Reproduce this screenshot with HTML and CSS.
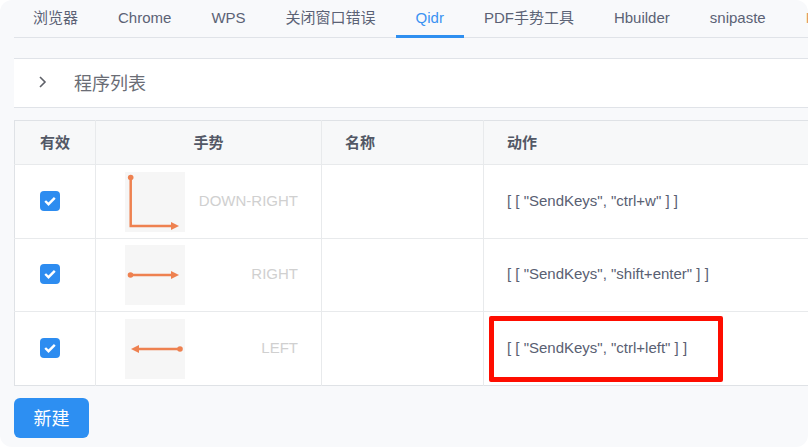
FILE: index.html
```html
<!DOCTYPE html>
<html lang="zh">
<head>
<meta charset="utf-8">
<title>Qidr</title>
<link rel="stylesheet" href="styles.css">
</head>
<body>
<div class="app">
  <nav class="tabs">
    <a class="tab first">浏览器</a>
    <a class="tab">Chrome</a>
    <a class="tab">WPS</a>
    <a class="tab">关闭窗口错误</a>
    <a class="tab active">Qidr</a>
    <a class="tab">PDF手势工具</a>
    <a class="tab">Hbuilder</a>
    <a class="tab">snipaste</a>
    <a class="tab next">F</a>
  </nav>
  <div class="panel-head">
    <svg class="chev" width="10" height="14" viewBox="0 0 10 14"><path d="M2 2l5 5-5 5" fill="none" stroke="#5e6068" stroke-width="1.600"/></svg>
    <span class="panel-title">程序列表</span>
  </div>
  <div class="table-wrap">
    <table class="table">
      <colgroup>
        <col class="c1"><col class="c2"><col class="c3"><col class="c4">
      </colgroup>
      <thead>
        <tr><th>有效</th><th>手势</th><th class="left">名称</th><th class="left act">动作</th></tr>
      </thead>
      <tbody>
        <tr class="r1">
          <td><span class="check"><svg width="12" height="10" viewBox="0 0 12 10"><path d="M1.200 5 4.500 8.200 10.800 1.800" fill="none" stroke="#fff" stroke-width="2.400"/></svg></span></td>
          <td><div class="gesture">
            <div class="thumb"><svg width="60" height="60" viewBox="0 0 60 60"><circle cx="5.700" cy="5.500" r="2.800" fill="#ee8150"/><path d="M5.700 5.500V54H48" fill="none" stroke="#ee8150" stroke-width="2.500"/><path d="M54 54l-8-4v8z" fill="#ee8150"/></svg></div>
            <span class="gname">DOWN-RIGHT</span></div></td>
          <td></td>
          <td class="action"><span class="txt">[ [ "SendKeys", "ctrl+w" ] ]</span></td>
        </tr>
        <tr class="r2">
          <td><span class="check"><svg width="12" height="10" viewBox="0 0 12 10"><path d="M1.200 5 4.500 8.200 10.800 1.800" fill="none" stroke="#fff" stroke-width="2.400"/></svg></span></td>
          <td><div class="gesture">
            <div class="thumb"><svg width="60" height="60" viewBox="0 0 60 60"><circle cx="5.500" cy="30" r="2.800" fill="#ee8150"/><path d="M5.500 30H48" fill="none" stroke="#ee8150" stroke-width="2.500"/><path d="M54 30l-8-4v8z" fill="#ee8150"/></svg></div>
            <span class="gname">RIGHT</span></div></td>
          <td></td>
          <td class="action"><span class="txt">[ [ "SendKeys", "shift+enter" ] ]</span></td>
        </tr>
        <tr class="r3">
          <td><span class="check"><svg width="12" height="10" viewBox="0 0 12 10"><path d="M1.200 5 4.500 8.200 10.800 1.800" fill="none" stroke="#fff" stroke-width="2.400"/></svg></span></td>
          <td><div class="gesture">
            <div class="thumb"><svg width="60" height="60" viewBox="0 0 60 60"><circle cx="55" cy="30" r="2.800" fill="#ee8150"/><path d="M55 30H12" fill="none" stroke="#ee8150" stroke-width="2.500"/><path d="M6 30l8-4v8z" fill="#ee8150"/></svg></div>
            <span class="gname">LEFT</span></div></td>
          <td></td>
          <td class="action"><span class="txt">[ [ "SendKeys", "ctrl+left" ] ]</span></td>
        </tr>
      </tbody>
    </table>
    <div class="highlight"></div>
  </div>
  <button class="btn" type="button">新建</button>
</div>
</body>
</html>
```
FILE: styles.css
```css
* { box-sizing: border-box; }
html, body { margin: 0; padding: 0; background: #fff; }
body {
  width: 808px;
  height: 447px;
  overflow: hidden;
  font-family: "Liberation Sans", "Noto Sans CJK SC", sans-serif;
}
.app {
  width: 808px;
  height: 447px;
  background: #f8f9fb;
  border-radius: 12px;
  padding-left: 14px;
  overflow: hidden;
}
.tabs {
  display: flex;
  height: 38px;
  border-bottom: 1px solid #e0e3e8;
  white-space: nowrap;
}
.tab {
  flex: none;
  height: 38px;
  padding: 0 20px;
  font-size: 15px;
  line-height: 36px;
  color: #5b6275;
}
.tab.first { padding-left: 19px; }
.tab.active {
  color: #3a92f2;
  border-bottom: 3px solid #2f8ff0;
}
.tab.next { color: #e0985f; }
.panel-head {
  display: flex;
  align-items: center;
  height: 50px;
  margin-top: 20px;
  padding-bottom: 3px;
  background: #fff;
  border-top: 1px solid #e0e3e8;
  border-bottom: 1px solid #e0e3e8;
  padding-left: 24px;
}
.chev { flex: none; }
.panel-title {
  margin-left: 26px;
  font-size: 18px;
  color: #6a6d75;
}
.table-wrap {
  position: relative;
  margin-top: 12px;
}
.table {
  table-layout: fixed;
  border-collapse: collapse;
  width: 794px;
  background: #fff;
  border-top: 1px solid #dfe2e6;
  border-left: 1px solid #dfe2e6;
  border-bottom: 1px solid #dfe2e6;
}
.c1 { width: 81px; }
.c2 { width: 226px; }
.c3 { width: 162px; }
th {
  height: 44px;
  background: #f7f8f9;
  font-size: 15px;
  font-weight: 700;
  color: #535866;
  text-align: center;
  border-right: 1px solid #e8eaec;
  border-bottom: 1px solid #e8eaec;
  padding: 0 0 2px;
}
th.left { text-align: left; padding-left: 23px; }
th.act { border-right: 0; }
td {
  padding: 0;
  text-align: left;
  border-right: 1px solid #e8eaec;
  border-bottom: 1px solid #e8eaec;
}
.r1 td { height: 74px; }
.r2 td { height: 73px; }
.r3 td { height: 74px; border-bottom: 0; }
td.action {
  padding-left: 23px;
  font-size: 15px;
  color: #596072;
  border-right: 0;
}
.txt { display: block; margin-top: -3px; }
.check {
  display: flex;
  align-items: center;
  justify-content: center;
  width: 20px;
  height: 20px;
  margin: -2px 0 0 25px;
  background: #2d8cf0;
  border-radius: 4px;
}
.gesture {
  display: flex;
  align-items: center;
  padding-left: 29px;
  padding-right: 23px;
}
.thumb {
  flex: none;
  width: 60px;
  height: 60px;
  background: #f6f6f6;
}
.thumb svg { display: block; }
.gname {
  flex: 1;
  margin-top: -3px;
  text-align: right;
  font-size: 15px;
  color: #d0d0d0;
}
.highlight {
  position: absolute;
  left: 475px;
  top: 196px;
  width: 234px;
  height: 66px;
  border: 5px solid #fe0d00;
  border-radius: 2px;
}
.btn {
  display: block;
  width: 75px;
  height: 40px;
  margin-top: 12px;
  border: 0;
  border-radius: 6px;
  background: #2d8ff2;
  color: #fff;
  font: 18px "Liberation Sans", "Noto Sans CJK SC", sans-serif;
  padding: 0 0 2px;
}
```
